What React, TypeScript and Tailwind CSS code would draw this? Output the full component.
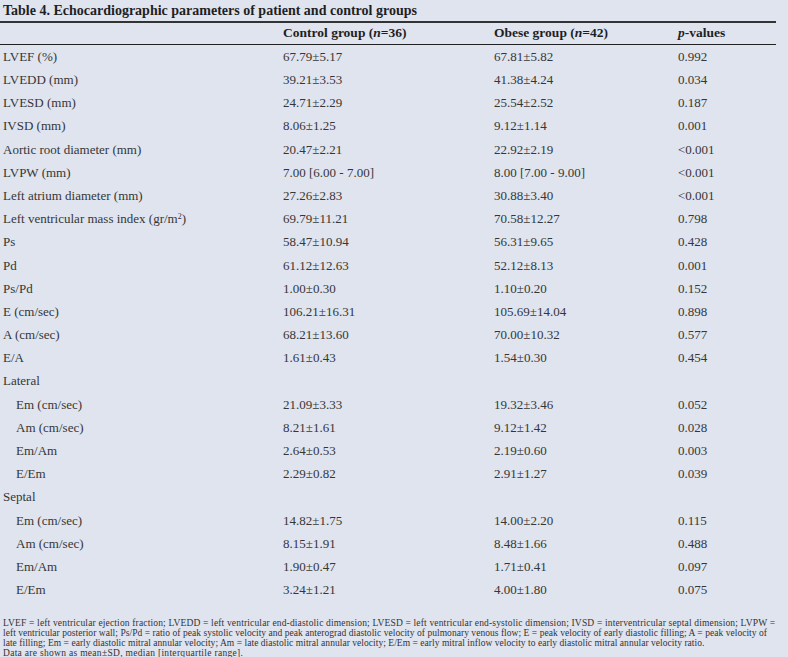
import React from "react";

type Row = { label: string; c?: string; o?: string; p?: string; indent?: boolean; sup?: boolean };

const rows: Row[] = [
  { label: "LVEF (%)", c: "67.79±5.17", o: "67.81±5.82", p: "0.992" },
  { label: "LVEDD (mm)", c: "39.21±3.53", o: "41.38±4.24", p: "0.034" },
  { label: "LVESD (mm)", c: "24.71±2.29", o: "25.54±2.52", p: "0.187" },
  { label: "IVSD (mm)", c: "8.06±1.25", o: "9.12±1.14", p: "0.001" },
  { label: "Aortic root diameter (mm)", c: "20.47±2.21", o: "22.92±2.19", p: "<0.001" },
  { label: "LVPW (mm)", c: "7.00 [6.00 - 7.00]", o: "8.00 [7.00 - 9.00]", p: "<0.001" },
  { label: "Left atrium diameter (mm)", c: "27.26±2.83", o: "30.88±3.40", p: "<0.001" },
  { label: "Left ventricular mass index (gr/m", sup: true, c: "69.79±11.21", o: "70.58±12.27", p: "0.798" },
  { label: "Ps", c: "58.47±10.94", o: "56.31±9.65", p: "0.428" },
  { label: "Pd", c: "61.12±12.63", o: "52.12±8.13", p: "0.001" },
  { label: "Ps/Pd", c: "1.00±0.30", o: "1.10±0.20", p: "0.152" },
  { label: "E (cm/sec)", c: "106.21±16.31", o: "105.69±14.04", p: "0.898" },
  { label: "A (cm/sec)", c: "68.21±13.60", o: "70.00±10.32", p: "0.577" },
  { label: "E/A", c: "1.61±0.43", o: "1.54±0.30", p: "0.454" },
  { label: "Lateral" },
  { label: "Em (cm/sec)", indent: true, c: "21.09±3.33", o: "19.32±3.46", p: "0.052" },
  { label: "Am (cm/sec)", indent: true, c: "8.21±1.61", o: "9.12±1.42", p: "0.028" },
  { label: "Em/Am", indent: true, c: "2.64±0.53", o: "2.19±0.60", p: "0.003" },
  { label: "E/Em", indent: true, c: "2.29±0.82", o: "2.91±1.27", p: "0.039" },
  { label: "Septal" },
  { label: "Em (cm/sec)", indent: true, c: "14.82±1.75", o: "14.00±2.20", p: "0.115" },
  { label: "Am (cm/sec)", indent: true, c: "8.15±1.91", o: "8.48±1.66", p: "0.488" },
  { label: "Em/Am", indent: true, c: "1.90±0.47", o: "1.71±0.41", p: "0.097" },
  { label: "E/Em", indent: true, c: "3.24±1.21", o: "4.00±1.80", p: "0.075" },
];

export default function App() {
  return (
    <div
      className="w-[788px] h-[657px] bg-[#dfe4ef] text-[#363636] overflow-hidden"
      style={{ fontFamily: '"Liberation Serif", "Times New Roman", serif' }}
    >
      <div className="w-[776px]">
        <div className="h-[23px] border-b-2 border-[#333] pl-[3px] text-[14px] font-bold leading-[21px] text-[#1f1f1f]">
          Table 4. Echocardiographic parameters of patient and control groups
        </div>
        <div className="grid grid-cols-[283px_211px_184px_1fr] h-[22px] border-b border-[#222] items-center text-[13.5px] font-bold text-[#1f1f1f]">
          <div />
          <div>
            Control group (<i>n</i>=36)
          </div>
          <div>
            Obese group (<i>n</i>=42)
          </div>
          <div>
            <i>p</i>-values
          </div>
        </div>
        {rows.map((r, i) => (
          <div
            key={i}
            className="grid grid-cols-[283px_211px_184px_1fr] h-[23.2px] items-center text-[13px]"
          >
            <div className={r.indent ? "pl-[16px]" : "pl-[3px]"}>
              {r.label}
              {r.sup && (
                <>
                  <sup className="text-[8px]">2</sup>)
                </>
              )}
            </div>
            <div>{r.c}</div>
            <div>{r.o}</div>
            <div>{r.p}</div>
          </div>
        ))}
      </div>
      <div className="mt-[16px] pl-[3px] text-[9.5px] leading-[10px] text-[#333] whitespace-nowrap">
        <div className="tracking-[0.16px]">
          LVEF = left ventricular ejection fraction; LVEDD = left ventricular end-diastolic dimension; LVESD = left ventricular end-systolic dimension; IVSD = interventricular septal dimension; LVPW =
        </div>
        <div className="tracking-[0.04px]">
          left ventricular posterior wall; Ps/Pd = ratio of peak systolic velocity and peak anterograd diastolic velocity of pulmonary venous flow; E = peak velocity of early diastolic filling; A = peak velocity of
        </div>
        <div className="tracking-[0.04px]">
          late filling; Em = early diastolic mitral annular velocity; Am = late diastolic mitral annular velocity; E/Em = early mitral inflow velocity to early diastolic mitral annular velocity ratio.
        </div>
        <div className="tracking-[0.3px]">Data are shown as mean±SD, median [interquartile range].</div>
      </div>
    </div>
  );
}
